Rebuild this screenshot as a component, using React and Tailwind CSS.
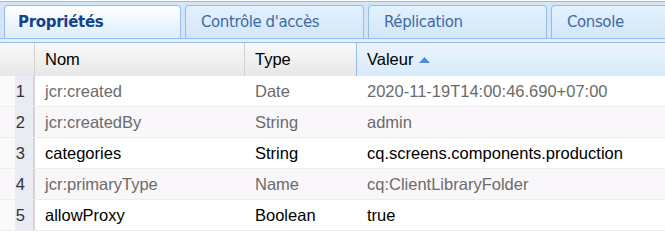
const TABS = ['Propriétés', "Contrôle d'accès", 'Réplication', 'Console']

const ROWS = [
  { name: 'jcr:created', type: 'Date', value: '2020-11-19T14:00:46.690+07:00', grey: true },
  { name: 'jcr:createdBy', type: 'String', value: 'admin', grey: true },
  { name: 'categories', type: 'String', value: 'cq.screens.components.production' },
  { name: 'jcr:primaryType', type: 'Name', value: 'cq:ClientLibraryFolder', grey: true },
  { name: 'allowProxy', type: 'Boolean', value: 'true' },
]

const cols = 'grid grid-cols-[35px_210px_112px_1fr]'

export default function App() {
  return (
    <div className="w-[665px] h-[246px] bg-white overflow-hidden font-['Liberation_Sans',Arial,sans-serif]">
      {/* tab strip */}
      <div className="mt-[1px] border-t border-[#99bbe8] bg-[#d3e6f8] pt-[3px] flex gap-[4px] pl-[4px] h-[37px]">
        {TABS.map((t, i) => (
          <div
            key={t}
            className={
              i === 0
                ? 'w-[177px] shrink-0 rounded-t-[4px] border border-b-0 border-[#99bbe8] bg-gradient-to-b from-white to-[#dcedfc] flex items-center pl-[13px] pt-[1px] text-[15px] font-bold text-[#15428b] font-["DejaVu_Sans",Verdana,sans-serif] tracking-[-0.3px]'
                : 'w-[179px] shrink-0 rounded-t-[4px] border border-b-0 border-[#99bbe8] bg-gradient-to-b from-[#e3f1fd] to-[#d3e7f9] flex items-center pl-[15px] text-[15px] text-[#416aa3] font-["DejaVu_Sans",Verdana,sans-serif] tracking-[-0.4px]'
            }
          >
            {t}
          </div>
        ))}
      </div>
      <div className="h-[5px] border-y border-[#99bbe8] bg-[#dfeffc]" />

      {/* header */}
      <div className={`${cols} h-[33px] text-[16.5px] text-black`}>
        <div className="bg-gradient-to-b from-[#f9f9f9] to-[#e7e7e9] border-r border-[#d5d0d0]" />
        <div className="bg-gradient-to-b from-[#f9f9f9] to-[#e7e7e9] border-r border-[#d5d0d0] flex items-center pl-[10px]">Nom</div>
        <div className="bg-gradient-to-b from-[#f9f9f9] to-[#e7e7e9] border-r border-[#99bbe8] flex items-center pl-[10px]">Type</div>
        <div className="bg-gradient-to-b from-[#ebf3fd] to-[#d8ebfb] flex items-center pl-[10px] gap-[6px]">
          Valeur
          <svg width="11" height="6" viewBox="0 0 11 6" className="mt-[1px]">
            <polygon points="0,6 5.5,0 11,6" fill="#4a8fd6" />
          </svg>
        </div>
      </div>

      {/* rows */}
      {ROWS.map((r, i) => (
        <div
          key={r.name}
          className={`${cols} h-[31px] border-b border-[#ededed] text-[16.5px] ${i % 2 ? 'bg-[#f9f7f9]' : 'bg-white'} ${r.grey ? 'text-[#6b6b6b]' : 'text-black'}`}
        >
          <div className="flex">
            <div className={`w-[15px] ${i % 2 ? 'bg-[#f9f7f9]' : 'bg-[#fbfafb]'}`} />
            <div className="flex-1 bg-[#e9edf3] border-r-2 border-[#d6d2d6] flex items-center justify-end pr-[8px] text-[16.5px] text-[#333]">
              {i + 1}
            </div>
          </div>
          <div className="flex items-center pl-[10px]">{r.name}</div>
          <div className="flex items-center pl-[10px]">{r.type}</div>
          <div className="flex items-center pl-[10px]">{r.value}</div>
        </div>
      ))}
    </div>
  )
}
